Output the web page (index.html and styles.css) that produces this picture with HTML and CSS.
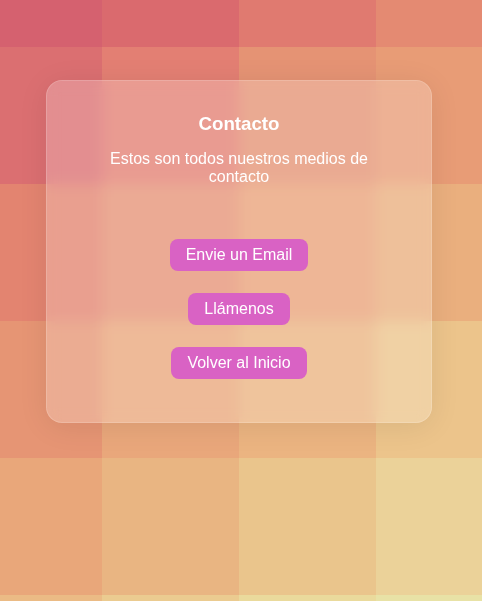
FILE: index.html
```html
<!DOCTYPE html>
<html lang="es">
<head>
<meta charset="utf-8">
<title>Contacto</title>
<link rel="stylesheet" href="styles.css">
</head>
<body>
<main class="page">
  <section class="card">
    <h3 class="title">Contacto</h3>
    <p class="subtitle">Estos son todos nuestros medios de contacto</p>
    <div class="actions">
      <a class="btn" href="#">Envie un Email</a>
      <a class="btn" href="#">Llámenos</a>
      <a class="btn" href="#">Volver al Inicio</a>
    </div>
  </section>
</main>
</body>
</html>
```

FILE: styles.css
```css
* { box-sizing: border-box; }
html, body { margin: 0; padding: 0; }
body {
  font-family: "Liberation Sans", Arial, sans-serif;
  color: #fff;
}
.page {
  min-height: 100vh;
  padding-top: 80px;
  padding-left: 46px;
  background-color: #e9b582;
  background-image:
    linear-gradient(to right, #d5616f 0 102px, #da6a6e 102px 239px, #e07a70 239px 376px, #e48a72 376px),
    linear-gradient(to right, #db6f71 0 102px, #e37f73 102px 239px, #e59374 239px 376px, #e89c76 376px),
    linear-gradient(to right, #e38470 0 102px, #e69376 102px 239px, #e9a279 239px 376px, #eaaf7e 376px),
    linear-gradient(to right, #e69574 0 102px, #e9a77b 102px 239px, #ebb481 239px 376px, #ecc48b 376px),
    linear-gradient(to right, #e9a77a 0 102px, #e9b582 102px 239px, #eac58c 239px 376px, #ebd299 376px),
    linear-gradient(to right, #ebbb85 0 102px, #ebcb90 102px 239px, #eada9c 239px 376px, #e8e2a6 376px);
  background-size: 100% 137px;
  background-repeat: no-repeat;
  background-position: 0 -90px, 0 47px, 0 184px, 0 321px, 0 458px, 0 595px;
}
.card {
  width: 386px;
  height: 343px;
  padding: 32px 20px 43px;
  text-align: center;
  background: rgba(255, 255, 255, 0.22);
  border: 1px solid rgba(255, 255, 255, 0.16);
  border-radius: 16px;
  box-shadow: 0 4px 30px rgba(0, 0, 0, 0.08);
  backdrop-filter: blur(7px);
  -webkit-backdrop-filter: blur(7px);
}
.title {
  margin: 0;
  font-size: 18.72px;
  line-height: 21.5px;
  font-weight: bold;
}
.subtitle {
  margin: 15px auto 0;
  max-width: 280px;
  font-size: 16px;
  line-height: 18.4px;
}
.actions {
  margin-top: 53px;
  display: flex;
  flex-direction: column;
  align-items: center;
  gap: 22px;
}
.btn {
  display: inline-block;
  padding: 7px 16px;
  font-size: 16px;
  line-height: 18px;
  color: #fff;
  text-decoration: none;
  background: #d962c4;
  border-radius: 8px;
}
```
